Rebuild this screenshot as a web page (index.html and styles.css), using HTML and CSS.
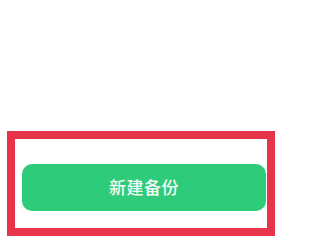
FILE: index.html
```html
<html>
  <head>
    <meta charset="utf-8" />
    <meta name="viewport" content="width=device-width, initial-scale=1" />
    <title>新建备份</title>
    <link rel="stylesheet" href="styles.css">
  </head>
  <body>
    <div class="page">
      <div class="highlight">
        <button class="primary-btn">新建备份</button>
      </div>
    </div>
  </body>
</html>
```

FILE: styles.css
```css
body {
  margin: 0;
  background-color: #ffffff;
  font-family: "Noto Sans CJK SC", "Noto Sans", sans-serif;
}
.page {
  padding-top: 131px;
  padding-left: 7px;
}
.highlight {
  width: 268px;
  height: 105px;
  box-sizing: border-box;
  border: 8px solid #e6354b;
  padding: 25px 1px 0 7px;
}
.primary-btn {
  display: flex;
  align-items: center;
  justify-content: center;
  width: 100%;
  height: 47px;
  border: none;
  border-radius: 10px;
  background-color: #2ecb7a;
  color: #f4fbf7;
  font-family: "Noto Sans CJK SC", "Noto Sans", sans-serif;
  font-size: 17px;
  font-weight: 500;
  letter-spacing: 0.5px;
  padding: 0 0 2px 0;
}
```
